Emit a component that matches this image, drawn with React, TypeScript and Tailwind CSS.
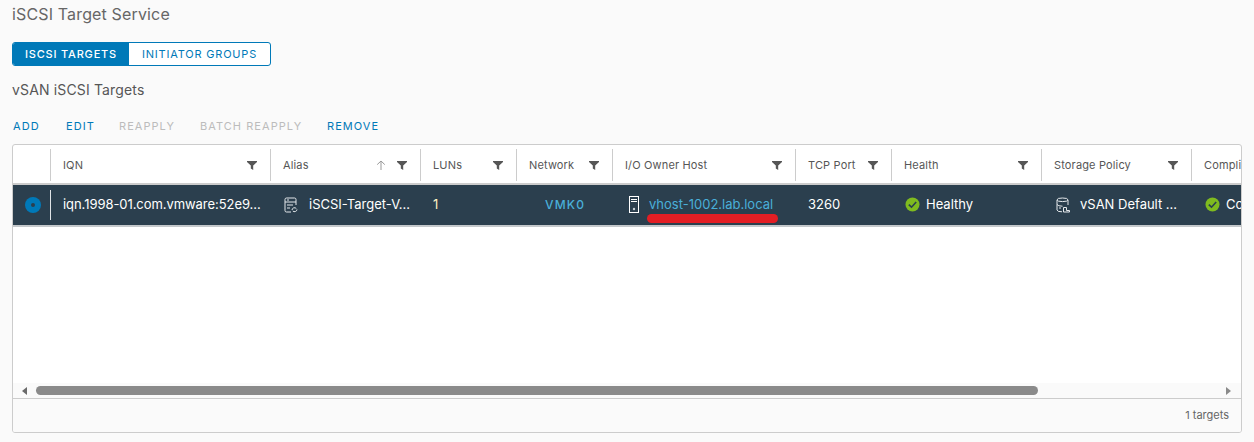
const COLS = [
  { label: "IQN", w: "w-[220px]", sort: false },
  { label: "Alias", w: "w-[150px]", sort: true },
  { label: "LUNs", w: "w-[96px]", sort: false },
  { label: "Network", w: "w-[96px]", sort: false },
  { label: "I/O Owner Host", w: "w-[183px]", sort: false },
  { label: "TCP Port", w: "w-[96px]", sort: false },
  { label: "Health", w: "w-[150px]", sort: false },
  { label: "Storage Policy", w: "w-[150px]", sort: false },
];

function Filter() {
  return (
    <svg width="10" height="10" viewBox="0 0 10 10" className="shrink-0 text-[#565656]">
      <path d="M0 1h10v1L6.2 5.6V10L3.8 8.6V5.6L0 2z" fill="currentColor" />
    </svg>
  );
}

function SortUp() {
  return (
    <svg width="10" height="10" viewBox="0 0 10 10" fill="none" stroke="#999999" className="shrink-0">
      <path d="M5 10V1M1.2 4.6 5 1l3.8 3.6" />
    </svg>
  );
}

function Check() {
  return (
    <svg width="15" height="15" viewBox="0 0 15 15" className="shrink-0">
      <circle cx="7.5" cy="7.5" r="7" fill="#7fbb1f" />
      <path d="M3.8 7.6 6.5 10.2 11.2 5" fill="none" stroke="#2a3f4e" strokeWidth="1.6" />
    </svg>
  );
}

function TargetIcon() {
  return (
    <svg width="14" height="16" viewBox="0 0 14 16" fill="none" stroke="#e4e8eb" className="shrink-0">
      <path d="M7 15H2.5Q1 15 1 13.5V2.5Q1 1 2.5 1h8Q12 1 12 2.5V8" />
      <path d="M1 5h11M3 3h2M3 8h6M3 11h3" />
      <path d="M8 13a2.5 2.5 0 0 1 4.3-1.5M13 12.5a2.5 2.5 0 0 1-4.2 1.5" />
    </svg>
  );
}

function PolicyIcon() {
  return (
    <svg width="14" height="16" viewBox="0 0 14 16" fill="none" stroke="#e4e8eb" className="shrink-0">
      <ellipse cx="6.5" cy="2.8" rx="5.5" ry="1.8" />
      <path d="M1 2.8V13q0 1.8 5 1.8M12 2.8V8M1 7.5q1 1.7 5.5 1.7M3 11h2" />
      <path d="M7.5 10.5h3v3h3v1.5h-6z" />
    </svg>
  );
}

function HostIcon() {
  return (
    <svg width="10" height="17" viewBox="0 0 10 17" fill="none" stroke="#ffffff" className="shrink-0">
      <rect x="0.5" y="0.5" width="9" height="16" />
      <path d="M2 3.5h6M2 5.5h6" />
      <circle cx="5" cy="13" r="1.2" fill="#c8d0d5" stroke="none" />
    </svg>
  );
}

function HeaderCell({ label, w, sort }: { label: string; w: string; sort: boolean }) {
  return (
    <div className={`${w} shrink-0 flex items-center h-full`}>
      <div className="w-px h-[32px] bg-[#cccccc] shrink-0" />
      <div className="flex-1 flex items-center pl-[12px] pr-[13px] min-w-0">
        <span className="flex-1 text-[11px] tracking-[0.15px] text-[#565656] whitespace-nowrap">{label}</span>
        {sort && <span className="mr-[11px]"><SortUp /></span>}
        <Filter />
      </div>
    </div>
  );
}

export default function App() {
  return (
    <div className="w-[1254px] h-[442px] overflow-hidden bg-[#fafafa] font-['Inter','Liberation_Sans',sans-serif] text-[#565656]">
      <div className="pl-[12px] pr-[12px]">
        <h1 className="text-[16px] leading-[20px] pt-[4px] text-[#666666] font-normal tracking-[0.15px]">iSCSI Target Service</h1>

        <div className="flex mt-[18px] w-[259px] h-[24px] rounded-[3px] border border-[#0079b8] bg-white overflow-hidden text-[11px] tracking-[0.8px]">
          <div className="w-[116px] flex items-center justify-center bg-[#0079b8] text-white font-medium">ISCSI TARGETS</div>
          <div className="flex-1 flex items-center justify-center text-[#0079b8] font-normal">INITIATOR GROUPS</div>
        </div>

        <h2 className="mt-[15px] text-[14px] leading-[18px] tracking-[0.15px] text-[#565656] font-normal">vSAN iSCSI Targets</h2>

        <div className="flex mt-[18px] h-[18px] items-center text-[11px] font-normal tracking-[1.05px] pl-[1px]">
          <span className="w-[53px] text-[#0079b8]">ADD</span>
          <span className="w-[53px] text-[#0079b8]">EDIT</span>
          <span className="w-[81px] text-[#bcbcbc]">REAPPLY</span>
          <span className="w-[127px] text-[#bcbcbc]">BATCH REAPPLY</span>
          <span className="text-[#0079b8]">REMOVE</span>
        </div>

        <div className="mt-[9px] w-[1230px] h-[289px] border border-[#cccccc] rounded-[3px] overflow-hidden flex flex-col bg-white">
          <div className="flex h-[40px] shrink-0 items-center border-b-[2px] border-[#cccccc] pt-[2px]">
            <div className="w-[37px] shrink-0" />
            {COLS.map((c) => <HeaderCell key={c.label} {...c} />)}
            <div className="flex-1 flex items-center h-full min-w-0">
              <div className="w-px h-[32px] bg-[#cccccc] shrink-0" />
              <span className="pl-[12px] text-[11px] tracking-[0.15px] whitespace-nowrap">Compliance</span>
            </div>
          </div>

          <div className="relative flex h-[42px] shrink-0 items-center bg-[#2b3f4e] border-b-[2px] border-[#c4c8cb] pb-[1px] text-[13px] text-white whitespace-nowrap">
            <div className="w-[37px] shrink-0 flex justify-center pl-[3px]">
              <div className="w-[16px] h-[16px] rounded-full bg-[#0079b8] flex items-center justify-center">
                <div className="w-[4px] h-[4px] rounded-full bg-[#2b3f4e]" />
              </div>
            </div>
            <div className="w-[220px] shrink-0 flex items-center h-[30px]">
              <div className="w-px h-[30px] bg-[#dfe3e6] shrink-0" />
              <span className="pl-[12px] tracking-[-0.06px]">iqn.1998-01.com.vmware:52e9...</span>
            </div>
            <div className="w-[150px] shrink-0 flex items-center gap-[11px] pl-[14px]">
              <TargetIcon />
              <span>iSCSI-Target-V...</span>
            </div>
            <div className="w-[96px] shrink-0 pl-[13px] text-[#fff3c4]">1</div>
            <div className="w-[96px] shrink-0 pl-[29px] text-[#49afd9] font-medium tracking-[1.2px] text-[12px]">VMK0</div>
            <div className="w-[183px] shrink-0 flex items-center gap-[10px] pl-[17px] text-[#49afd9]">
              <HostIcon />
              <span>vhost-1002.lab.local</span>
            </div>
            <div className="w-[96px] shrink-0 pl-[13px]">3260</div>
            <div className="w-[150px] shrink-0 flex items-center gap-[6px] pl-[14px]">
              <Check />
              <span>Healthy</span>
            </div>
            <div className="w-[150px] shrink-0 flex items-center gap-[10px] pl-[15px]">
              <PolicyIcon />
              <span>vSAN Default ...</span>
            </div>
            <div className="flex-1 flex items-center gap-[6px] pl-[14px] min-w-0 overflow-hidden">
              <Check />
              <span>Compliant</span>
            </div>
            <div className="absolute left-[634px] top-[29px] w-[131px] h-[9px] rounded-full bg-[#e31e24]" />
          </div>

          <div className="flex-1" />

          <div className="flex h-[15px] shrink-0 items-center bg-[#fafafa]">
            <div className="w-[23px] shrink-0 flex justify-end pr-[9px]">
              <div className="border-y-[4px] border-y-transparent border-r-[5px] border-r-[#6a6a6a]" />
            </div>
            <div className="w-[1002px] h-[9px] rounded-full bg-[#8a8a8a]" />
            <div className="flex-1 flex justify-end pr-[10px]">
              <div className="border-y-[4px] border-y-transparent border-l-[5px] border-l-[#8a8a8a]" />
            </div>
          </div>

          <div className="h-[34px] shrink-0 flex items-center justify-end border-t border-[#cccccc] bg-[#fafafa] pr-[12px] text-[11px] text-[#666666]">
            1 targets
          </div>
        </div>
      </div>
    </div>
  );
}
